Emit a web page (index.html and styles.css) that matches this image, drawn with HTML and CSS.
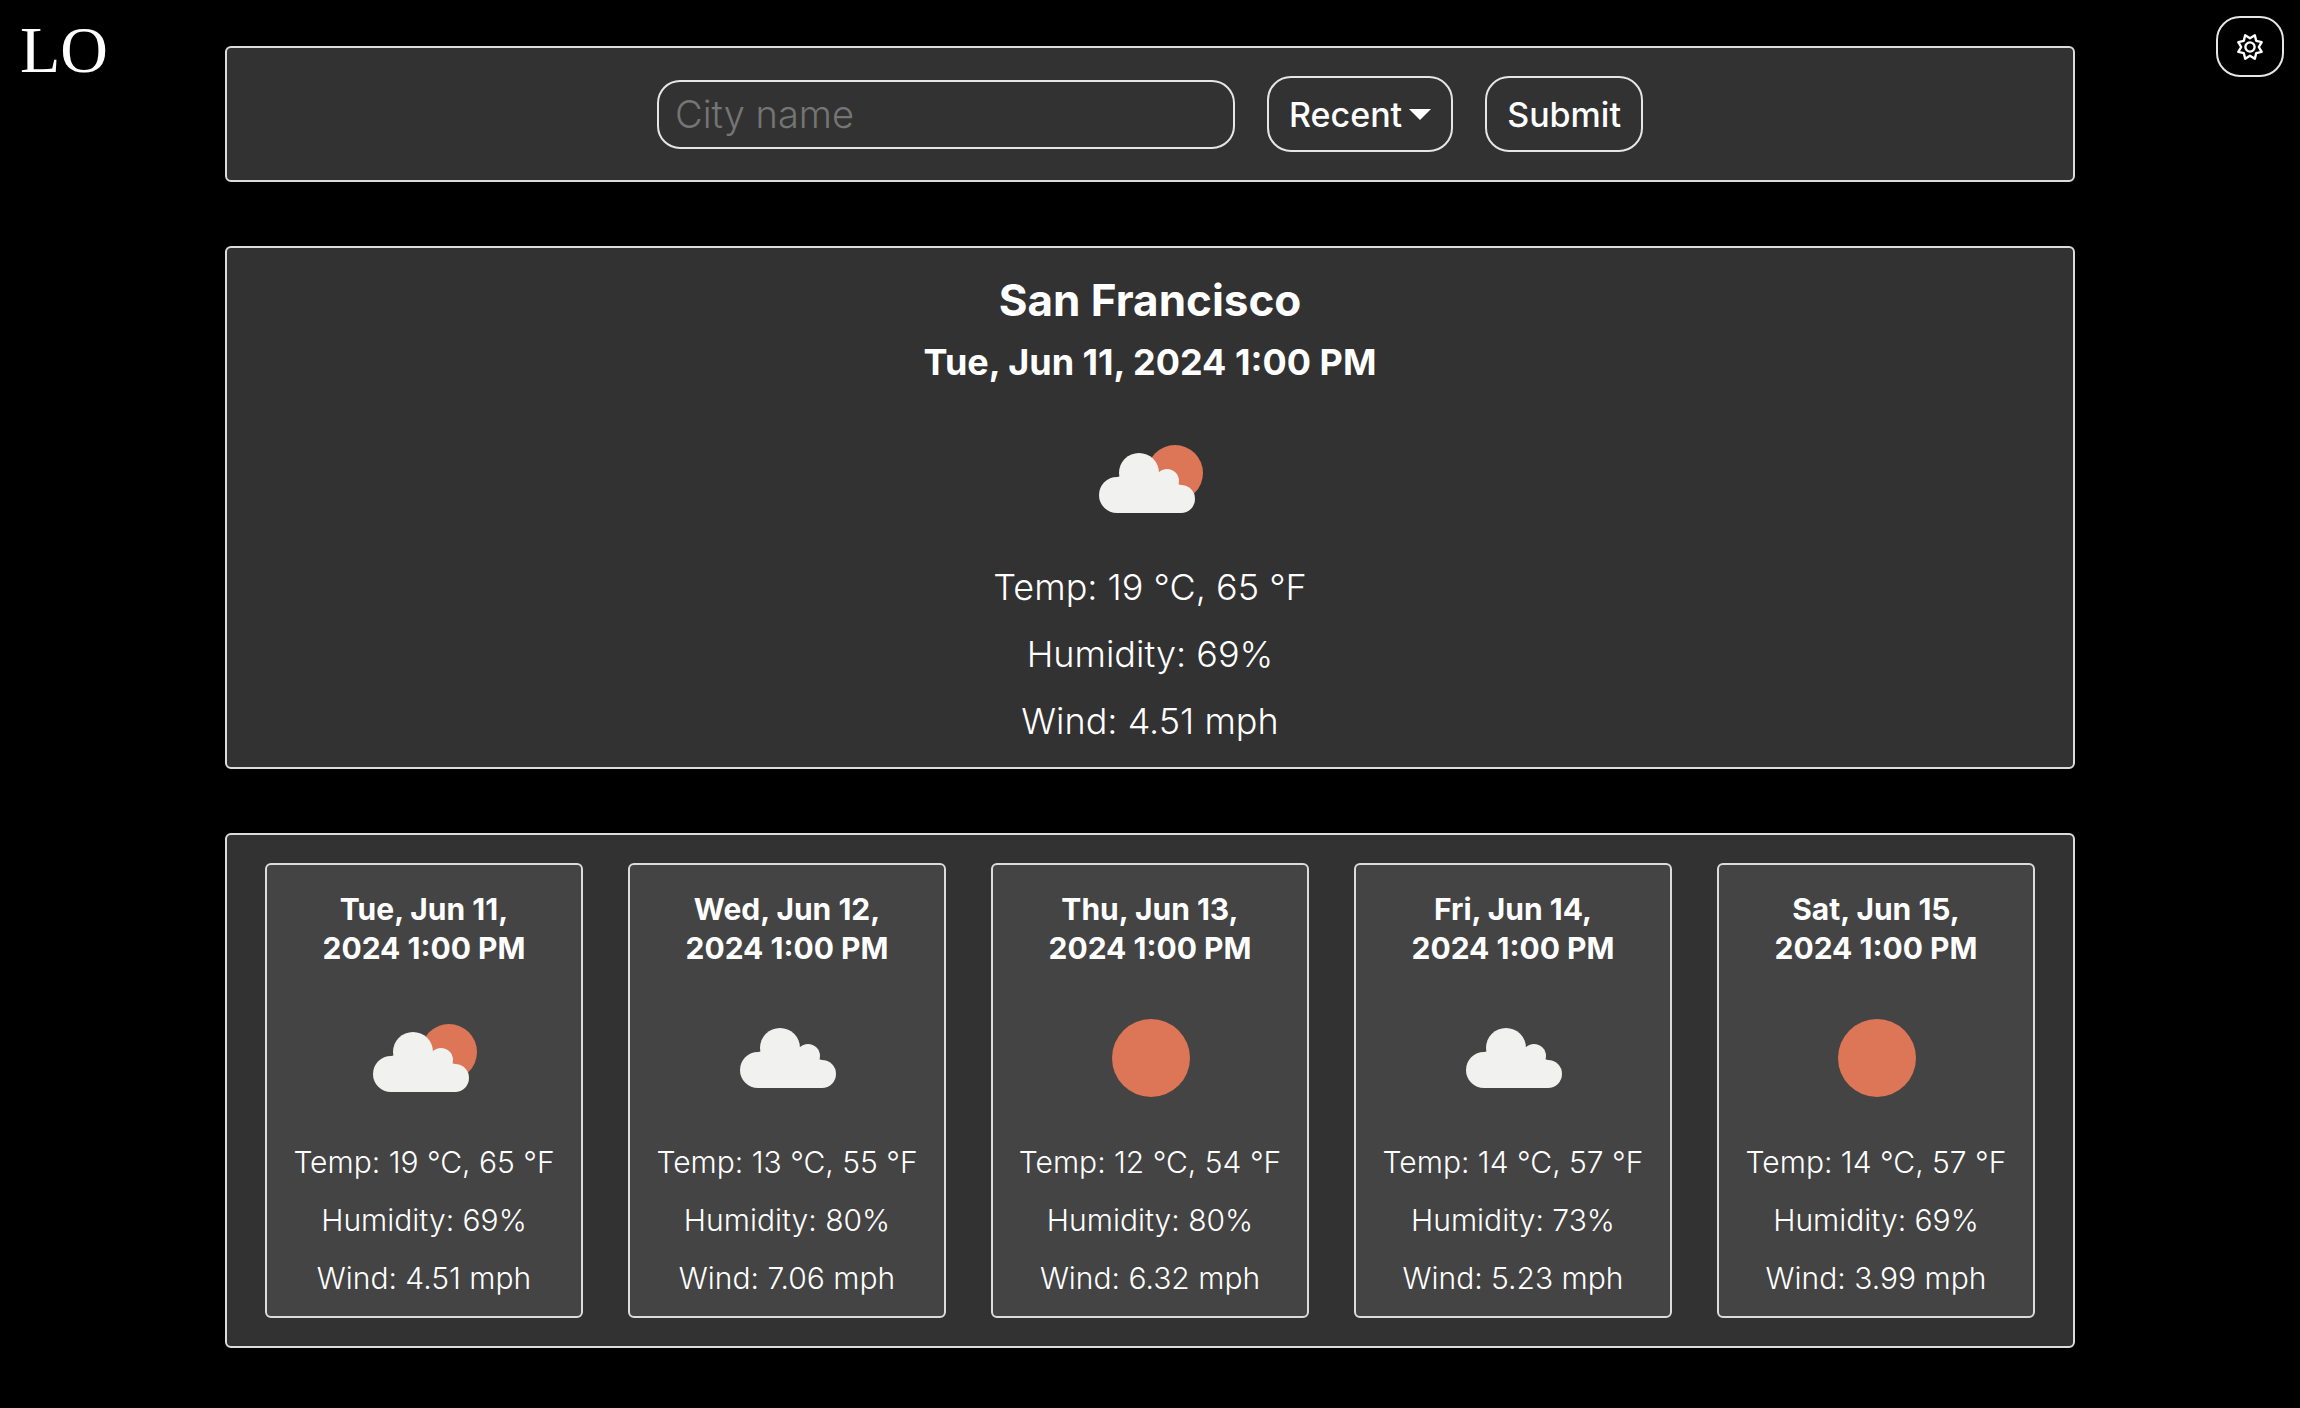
FILE: index.html
```html
<!DOCTYPE html>
<html lang="en">
<head>
<meta charset="utf-8">
<meta name="viewport" content="width=device-width, initial-scale=1">
<title>Weather</title>
<link rel="stylesheet" href="styles.css">
</head>
<body>
<svg width="0" height="0" class="sprites" aria-hidden="true">
  <symbol id="sun" viewBox="0 0 150 150"><circle class="sun" cx="76" cy="75" r="39"/></symbol>
  <symbol id="cloud-shape" viewBox="0 0 150 150">
    <g class="cloud"><circle cx="42" cy="91" r="18"/><circle cx="64" cy="69" r="20"/><circle cx="92" cy="77" r="12"/><circle cx="106" cy="95" r="14"/><path d="M42 109V73L64 69L92 77L106 81V109Z"/></g>
  </symbol>
  <symbol id="cloud" viewBox="0 0 150 150"><use href="#cloud-shape" x="4" y="-4" width="150" height="150"/></symbol>
  <symbol id="partly" viewBox="0 0 150 150"><circle class="sun" cx="100" cy="69" r="28"/><use href="#cloud-shape" width="150" height="150"/></symbol>
</svg>
<div class="page">
  <a class="logo" href="#">LO</a>
  <main class="content">
    <form class="panel search">
      <input class="city" type="text" placeholder="City name" aria-label="City name">
      <button class="btn" type="button">Recent<span class="caret"></span></button>
      <button class="btn" type="submit">Submit</button>
    </form>
    <section class="panel current">
      <h1>San Francisco</h1>
      <h2>Tue, Jun 11, 2024 1:00 PM</h2>
      <svg class="icon" role="img" aria-label="Partly cloudy"><use href="#partly"/></svg>
      <p>Temp: 19 °C, 65 °F</p>
      <p>Humidity: 69%</p>
      <p>Wind: 4.51 mph</p>
    </section>
    <section class="panel forecast">
      <article class="card">
        <h3>Tue, Jun 11,<br>2024 1:00 PM</h3>
        <svg class="icon" role="img" aria-label="Partly cloudy"><use href="#partly"/></svg>
        <p>Temp: 19 °C, 65 °F</p>
        <p>Humidity: 69%</p>
        <p>Wind: 4.51 mph</p>
      </article>
      <article class="card">
        <h3>Wed, Jun 12,<br>2024 1:00 PM</h3>
        <svg class="icon" role="img" aria-label="Cloudy"><use href="#cloud"/></svg>
        <p>Temp: 13 °C, 55 °F</p>
        <p>Humidity: 80%</p>
        <p>Wind: 7.06 mph</p>
      </article>
      <article class="card">
        <h3>Thu, Jun 13,<br>2024 1:00 PM</h3>
        <svg class="icon" role="img" aria-label="Clear"><use href="#sun"/></svg>
        <p>Temp: 12 °C, 54 °F</p>
        <p>Humidity: 80%</p>
        <p>Wind: 6.32 mph</p>
      </article>
      <article class="card">
        <h3>Fri, Jun 14,<br>2024 1:00 PM</h3>
        <svg class="icon" role="img" aria-label="Cloudy"><use href="#cloud"/></svg>
        <p>Temp: 14 °C, 57 °F</p>
        <p>Humidity: 73%</p>
        <p>Wind: 5.23 mph</p>
      </article>
      <article class="card">
        <h3>Sat, Jun 15,<br>2024 1:00 PM</h3>
        <svg class="icon" role="img" aria-label="Clear"><use href="#sun"/></svg>
        <p>Temp: 14 °C, 57 °F</p>
        <p>Humidity: 69%</p>
        <p>Wind: 3.99 mph</p>
      </article>
    </section>
  </main>
  <button class="settings" type="button" aria-label="Settings">
    <svg width="28" height="28" viewBox="-14 -14 28 28" fill="none" stroke="#fff" stroke-width="2.4" stroke-linejoin="round"><path d="M0 -8.8L4.8 -11.7L6.2 -6.2L11.7 -4.8L8.8 0L11.7 4.8L6.2 6.2L4.8 11.7L0 8.8L-4.8 11.7L-6.2 6.2L-11.7 4.8L-8.8 0L-11.7 -4.8L-6.2 -6.2L-4.8 -11.7Z"/><circle r="4.6"/></svg>
  </button>
</div>
</body>
</html>
```
FILE: styles.css
```css
* { box-sizing: border-box; }
body {
  margin: 0;
  min-height: 100vh;
  background: #000;
  color: #fff;
  font-family: Inter, "Open Sans", sans-serif;
}
h1, h2, h3, p { margin: 0; }
.sprites { position: absolute; }
.sun { fill: #dc7656; }
.cloud { fill: #f1f1f0; }

.page {
  display: grid;
  grid-template-columns: 225px minmax(0, 1fr) 225px;
  align-items: start;
}
.logo {
  padding: 12px 20px;
  color: #fff;
  font: 66px/76px "Liberation Serif", serif;
  text-decoration: none;
}
.settings {
  justify-self: end;
  display: flex;
  align-items: center;
  justify-content: center;
  width: 68px;
  height: 61px;
  margin: 16px;
  padding: 0;
  border: 2px solid #e6e6e6;
  border-radius: 24px;
  background: #000;
}
.content {
  display: grid;
  gap: 64px;
  padding: 46px 0 60px;
}
.panel {
  border: 2px solid #dcdcdc;
  border-radius: 6px;
  background: #323232;
}
.search {
  display: flex;
  align-items: center;
  justify-content: center;
  gap: 32px;
  padding: 28px;
}
.city {
  width: 578px;
  height: 69px;
  padding: 0 16px;
  border: 2px solid #e6e6e6;
  border-radius: 23px;
  background: transparent;
  color: #fff;
  font: 350 38px Inter, sans-serif;
}
.city::placeholder { color: #757575; }
.btn {
  display: flex;
  align-items: center;
  gap: 7px;
  height: 76px;
  padding: 0 20px;
  border: 2px solid #e6e6e6;
  border-radius: 24px;
  background: transparent;
  color: #fff;
  font: 500 34px Inter, sans-serif;
}
.caret {
  border: 11px solid transparent;
  border-top-color: #fff;
  border-bottom: 0;
}
.icon {
  display: block;
  width: 150px;
  height: 150px;
  margin: 0 auto;
}
.current { padding: 22px 0 12px; text-align: center; }
.current h1 { font-size: 44px; line-height: 60px; }
.current h2 { margin-bottom: 10px; font-size: 36px; line-height: 64px; }
.current p { font-size: 36px; font-weight: 350; line-height: 67px; }
.forecast {
  display: grid;
  grid-template-columns: repeat(5, minmax(0, 1fr));
  gap: 45px;
  padding: 28px 38px;
}
.card {
  padding: 25px 0 9px;
  border: 2px solid #dcdcdc;
  border-radius: 6px;
  background: #444;
  text-align: center;
}
.card h3 { margin-bottom: 15px; font-size: 30px; line-height: 39px; }
.card p { font-size: 30px; font-weight: 350; line-height: 58px; }
```
